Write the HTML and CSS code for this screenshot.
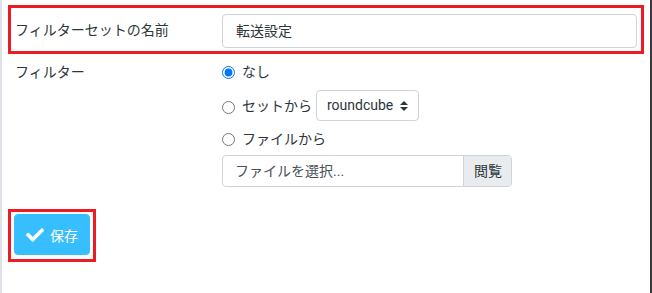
FILE: index.html
```html
<!DOCTYPE html>
<html lang="ja">
<head>
<meta charset="utf-8">
<link rel="stylesheet" href="styles.css">
</head>
<body>
<div class="frame">
  <div class="row row-name">
    <div class="label">フィルターセットの名前</div>
    <div class="value">
      <div class="text-input">転送設定</div>
    </div>
  </div>
  <div class="row row-filter">
    <div class="label">フィルター</div>
    <div class="value options">
      <label class="opt opt-1"><input type="radio" name="f" checked><span>なし</span></label>
      <label class="opt opt-2"><input type="radio" name="f"><span>セットから</span>
        <span class="select">roundcube
          <svg class="arrows" width="8" height="10" viewBox="0 0 8 10"><path d="M4 0L8 4H0Z M4 10L0 6H8Z" fill="#2c363a"/></svg>
        </span>
      </label>
      <label class="opt opt-3"><input type="radio" name="f"><span>ファイルから</span></label>
      <div class="file">
        <span class="file-text">ファイルを選択...</span>
        <span class="file-btn">閲覧</span>
      </div>
    </div>
  </div>
  <div class="save-wrap">
    <button class="save">
      <svg class="check" width="18" height="18" viewBox="0 0 512 512"><path fill="#fff" d="M173.898 439.404l-166.4-166.4c-9.997-9.997-9.997-26.206 0-36.204l36.203-36.204c9.997-9.998 26.207-9.998 36.204 0L192 312.69 432.095 72.596c9.997-9.997 26.207-9.997 36.204 0l36.203 36.204c9.997 9.997 9.997 26.206 0 36.204l-294.4 294.401c-9.998 9.997-26.207 9.997-36.204-.001z"/></svg>
      <span>保存</span>
    </button>
  </div>
</div>
</body>
</html>
```
FILE: styles.css
```css
html, body {
  margin: 0;
  padding: 0;
  background: #fff;
}
body {
  font-family: Roboto, "Noto Sans CJK JP", sans-serif;
  font-size: 14px;
  color: #2c363a;
}
.frame {
  box-sizing: border-box;
  height: 293px;
  width: 652px;
  border-left: 2px solid #dee2e6;
  border-right: 2px solid #3a3a3a;
  padding: 5px 6px 0 6px;
}
.row {
  display: flex;
}
.label {
  width: 207px;
  flex: none;
  box-sizing: border-box;
}
.value {
  flex: 1;
}
.row-name {
  border: 3px solid #ed1c24;
  padding: 6px 4px 3px 4px;
}
.row-name .label {
  width: 207px;
  padding-left: 0;
  line-height: 20px;
  padding-top: 6px;
}
.row-name .label {
  margin-left: 0;
}
.text-input {
  box-sizing: border-box;
  height: 34px;
  border: 1px solid #ced4da;
  border-radius: 4px;
  padding: 0 13px;
  line-height: 32px;
}
.row-filter {
  margin-top: 8px;
  padding-left: 7px;
}
.row-filter .label {
  line-height: 21px;
}
.options {
  display: flex;
  flex-direction: column;
  align-items: flex-start;
}
.opt {
  display: flex;
  align-items: center;
  line-height: 21px;
}
.opt input {
  margin: 0 7px 0 0;
  width: 13px;
  height: 13px;
}
.opt-1 { height: 21px; margin-bottom: 7px; }
.opt-2 { height: 31px; margin-bottom: 8px; }
.opt-2 input { margin-top: 4px; }
.opt-2 > span:first-of-type { margin-top: 2px; }
.opt-3 { height: 21px; margin-bottom: 5px; }
.select {
  box-sizing: border-box;
  display: inline-flex;
  align-items: center;
  height: 31px;
  width: 103px;
  margin-left: 4px;
  border: 1px solid #ced4da;
  border-radius: 4px;
  padding: 0 10px;
  justify-content: space-between;
}
.arrows {
  display: block;
}
.file {
  box-sizing: border-box;
  display: flex;
  width: 290px;
  height: 32px;
  border: 1px solid #ced4da;
  border-radius: 4px;
  overflow: hidden;
  line-height: 30px;
}
.file-text {
  flex: 1;
  padding-left: 12px;
  color: #495057;
}
.file-btn {
  width: 48px;
  box-sizing: border-box;
  padding-left: 10px;
  background: #e9ecef;
  border-left: 1px solid #ced4da;
}
.save-wrap {
  margin-top: 22px;
  display: inline-block;
  border: 3px solid #ed1c24;
  padding: 2px 3px 4px 3px;
}
.save {
  box-sizing: border-box;
  display: flex;
  align-items: center;
  width: 76px;
  height: 41px;
  background: #37beff;
  border: 1px solid #37beff;
  border-radius: 4px;
  color: #fff;
  font-family: Roboto, "Noto Sans CJK JP", sans-serif;
  font-size: 14px;
  padding: 0 0 0 11px;
  margin: 0;
}
.check {
  display: block;
  margin-right: 6px;
}
```
